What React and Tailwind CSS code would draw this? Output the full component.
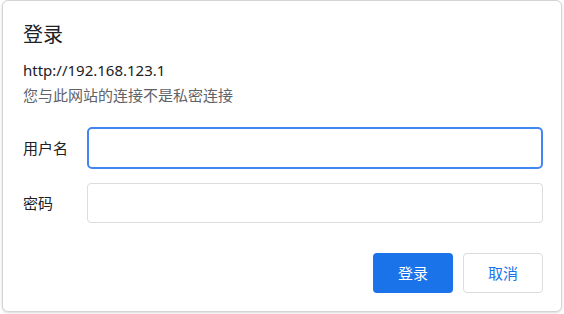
import React from 'react';

const font = { fontFamily: '"Noto Sans", "Noto Sans CJK SC", sans-serif' };

// Chrome 基本认证弹窗
export default function App() {
    return (
        <div className="w-[564px] h-[314px] bg-white" style={font}>
            <div className="ml-[2px] mr-[2px] w-[560px] h-[312px] bg-white border border-[#d4d4d4] rounded-[6px] shadow-[0_1px_3px_rgba(0,0,0,0.15)] flex flex-col pl-5 pr-[18px]">
                <h1 className="mt-[21px] text-[20px] leading-[26px] text-[#202124]">登录</h1>
                <p className="mt-[12px] text-[15px] leading-[21px] text-[#202124]">http://192.168.123.1</p>
                <p className="mt-[4px] text-[15px] leading-[20px] text-[#5f6368]">您与此网站的连接不是私密连接</p>

                <div className="mt-[22px] flex flex-col gap-[14px]">
                    <div className="flex items-center">
                        <label className="w-[64px] text-[15px] text-[#202124]">用户名</label>
                        <input
                            type="text"
                            className="flex-1 h-[42px] rounded-[5px] border-2 border-[#4285f4] outline-none px-2 text-[15px]"
                        />
                    </div>
                    <div className="flex items-center">
                        <label className="w-[64px] text-[15px] text-[#202124]">密码</label>
                        <input
                            type="password"
                            className="flex-1 h-[40px] rounded-[4px] border border-[#dadce0] outline-none px-2 text-[15px]"
                        />
                    </div>
                </div>

                <div className="mt-auto mb-[18px] flex justify-end gap-[10px]">
                    <button className="w-[80px] h-[40px] rounded-[4px] bg-[#1a73e8] text-white text-[15px]">登录</button>
                    <button className="w-[80px] h-[40px] rounded-[4px] border border-[#dadce0] bg-white text-[#1a73e8] text-[15px]">取消</button>
                </div>
            </div>
        </div>
    );
}
